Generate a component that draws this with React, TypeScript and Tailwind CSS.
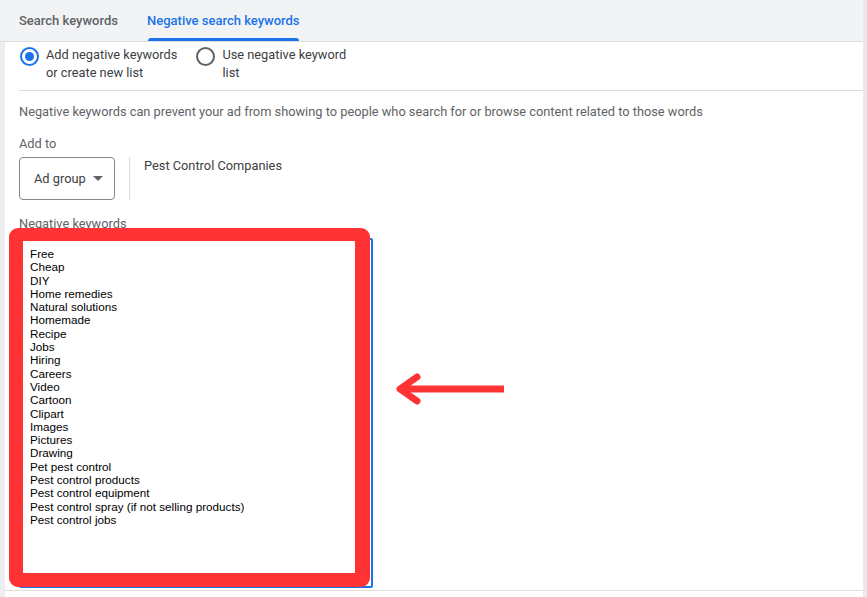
import React from 'react';

const keywords = [
  'Free',
  'Cheap',
  'DIY',
  'Home remedies',
  'Natural solutions',
  'Homemade',
  'Recipe',
  'Jobs',
  'Hiring',
  'Careers',
  'Video',
  'Cartoon',
  'Clipart',
  'Images',
  'Pictures',
  'Drawing',
  'Pet pest control',
  'Pest control products',
  'Pest control equipment',
  'Pest control spray (if not selling products)',
  'Pest control jobs',
];

const Radio: React.FC<{ checked?: boolean; label: string[] }> = ({ checked, label }) => (
  <label className="flex items-start cursor-pointer">
    <span
      className={
        checked
          ? 'mt-[1px] w-[19px] h-[19px] rounded-full border-2 border-[#1a73e8] flex items-center justify-center shrink-0'
          : 'mt-[1px] w-[19px] h-[19px] rounded-full border-2 border-[#5f6368] flex items-center justify-center shrink-0'
      }
    >
      {checked && <span className="w-[9px] h-[9px] rounded-full bg-[#1a73e8]" />}
    </span>
    <span className="ml-[7px] text-[12.8px] leading-[18px] text-[#3c4043]">
      {label.map((l) => (
        <span key={l} className="block">
          {l}
        </span>
      ))}
    </span>
  </label>
);

const App: React.FC = () => {
  return (
    <div className="w-[867px] h-[597px] flex overflow-hidden bg-white font-['Roboto',_'Liberation_Sans',_sans-serif]">
      <div className="flex-1 flex flex-col">
        {/* tabs */}
        <div className="h-[42px] bg-[#f1f3f4] border-b border-[#dadce0] flex items-end pl-[19px] shrink-0">
          <div className="h-full flex items-center text-[13px] font-medium text-[#5f6368]">
            Search keywords
          </div>
          <div className="ml-[29px] h-full flex flex-col">
            <div className="flex-1 flex items-center pt-[3px] text-[13px] font-medium text-[#1a73e8]">
              Negative search keywords
            </div>
            <div className="h-[3px] mx-[1px] bg-[#1a73e8] rounded-t-[3px]" />
          </div>
        </div>

        <div className="flex-1 flex">
          <div className="w-[5px] bg-[#eceef1] shrink-0" />
          <div className="flex-1 flex flex-col pl-[14px] relative">
            <div className="flex pt-[4px] pb-[8px] pl-[1px] border-b border-[#dadce0]">
              <Radio checked label={['Add negative keywords', 'or create new list']} />
              <div className="ml-[19px]">
                <Radio label={['Use negative keyword', 'list']} />
              </div>
            </div>

            <p className="mt-[12px] text-[12.8px] leading-[18px] text-[#5f6368]">
              Negative keywords can prevent your ad from showing to people who search for or browse content related to those words
            </p>

            <div className="mt-[14px] text-[12.8px] leading-[18px] text-[#5f6368]">Add to</div>

            <div className="mt-[4px] flex items-start">
              <button className="w-[96px] h-[43px] border border-[#80868b] rounded-[4px] flex items-center pl-[14px] text-[12.8px] text-[#3c4043]">
                Ad group
                <svg width="10" height="5" viewBox="0 0 10 5" className="ml-[7px]">
                  <path d="M0 0 L10 0 L5 5 Z" fill="#5f6368" />
                </svg>
              </button>
              <div className="ml-[14px] w-px h-[43px] bg-[#dadce0]" />
              <div className="ml-[14px] text-[12.8px] leading-[18px] text-[#3c4043]">Pest Control Companies</div>
            </div>

            <div className="mt-[15px] text-[12.8px] leading-[18px] text-[#5f6368]">Negative keywords</div>

            <div className="mt-[5px] relative w-[354px] h-[350px] border-2 border-[#1a73e8] rounded-[2px] pl-[9px] pt-[7px]">
              <div className="text-[11.7px] leading-[13.3px] text-black font-['Liberation_Sans',_Arial,_sans-serif]">
                {keywords.map((k) => (
                  <div key={k}>{k}</div>
                ))}
              </div>
              <div className="absolute left-[-12px] top-[-12px] w-[361px] h-[359px] border-[14px] border-t-[13px] border-r-[15px] border-[#ff3333] rounded-[9px] pointer-events-none" />
            </div>

            <div className="mt-[2px] -ml-[14px] border-b border-[#e3e1da]" />

            <svg
              width="120"
              height="45"
              viewBox="0 0 120 45"
              className="absolute left-[385px] top-[324px]"
            >
              <path d="M12 23 L114 23" stroke="#ff3333" strokeWidth="7" />
              <path
                d="M27 11 L10 23 L27 35"
                stroke="#ff3333"
                strokeWidth="7"
                fill="none"
                strokeLinecap="round"
                strokeLinejoin="round"
              />
            </svg>
          </div>
        </div>
      </div>
      <div className="w-[4px] bg-[#e8eaed] shrink-0" />
    </div>
  );
};

export default App;
